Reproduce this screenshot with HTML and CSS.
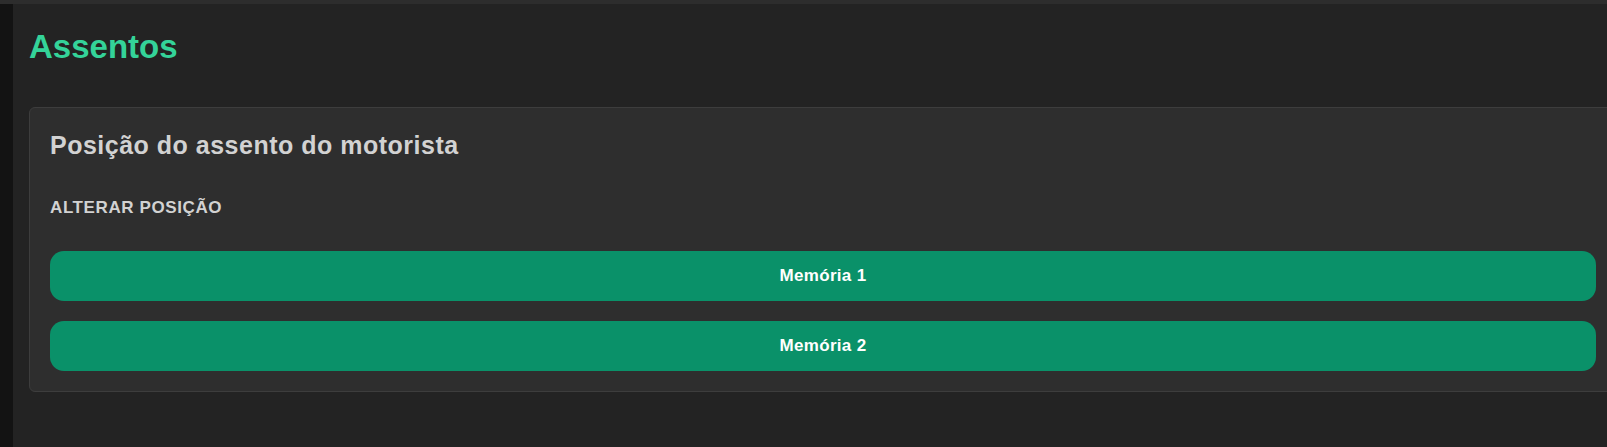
FILE: index.html
```html
<!DOCTYPE html>
<html lang="pt-BR">

<head>
    <meta charset="UTF-8">
    <title>Assentos</title>
    <link rel="stylesheet" href="styles.css">
</head>

<body>
    <div class="topbar"></div>
    <div class="layout">
        <aside class="sidebar"></aside>
        <main class="main">
            <h1 class="page-title">Assentos</h1>

            <section class="card">
                <h2 class="card-title">Posição do assento do motorista</h2>
                <p class="section-label">ALTERAR POSIÇÃO</p>
                <div class="btn-list">
                    <button class="btn-memoria">Memória 1</button>
                    <button class="btn-memoria">Memória 2</button>
                </div>
            </section>
        </main>
    </div>
</body>

</html>
```

FILE: styles.css
```css
:root {
    --bg-color: #232323;
    --sidebar-color: #131313;
    --topbar-color: #2d2d2d;
    --card-color: #2e2e2e;
    --card-border: #3d3d3d;
    --accent-color: #34d399;
    --button-color: #0a9169;
    --text-color: #d2d2d2;
}

* {
    margin: 0;
    padding: 0;
    box-sizing: border-box;
}

body {
    font-family: 'Liberation Sans', Arial, sans-serif;
    background: var(--bg-color);
    min-height: 100vh;
    overflow: hidden;
}

.topbar {
    height: 4px;
    background: var(--topbar-color);
}

.layout {
    display: flex;
    min-height: calc(100vh - 4px);
}

.sidebar {
    flex: 0 0 13px;
    background: var(--sidebar-color);
}

.main {
    flex: 0 0 1620px;
    padding: 24px 16px;
}

.page-title {
    color: var(--accent-color);
    font-size: 33px;
    font-weight: 700;
    line-height: 38px;
    margin-bottom: 41px;
}

.card {
    background: var(--card-color);
    border: 1px solid var(--card-border);
    border-radius: 6px;
    padding: 20px;
}

.card-title {
    color: var(--text-color);
    font-size: 25px;
    font-weight: 700;
    line-height: 1.4;
    letter-spacing: 0.5px;
    margin-bottom: 33px;
}

.section-label {
    color: var(--text-color);
    font-size: 17px;
    font-weight: 700;
    line-height: 1.4;
    letter-spacing: 0.6px;
    margin-bottom: 31px;
}

.btn-list {
    display: flex;
    flex-direction: column;
    gap: 20px;
}

.btn-memoria {
    height: 50px;
    width: 100%;
    background: var(--button-color);
    color: #fff;
    border: none;
    border-radius: 14px;
    font-family: 'Liberation Sans', Arial, sans-serif;
    font-size: 17px;
    font-weight: 700;
    letter-spacing: 0.3px;
    cursor: pointer;
}
```
